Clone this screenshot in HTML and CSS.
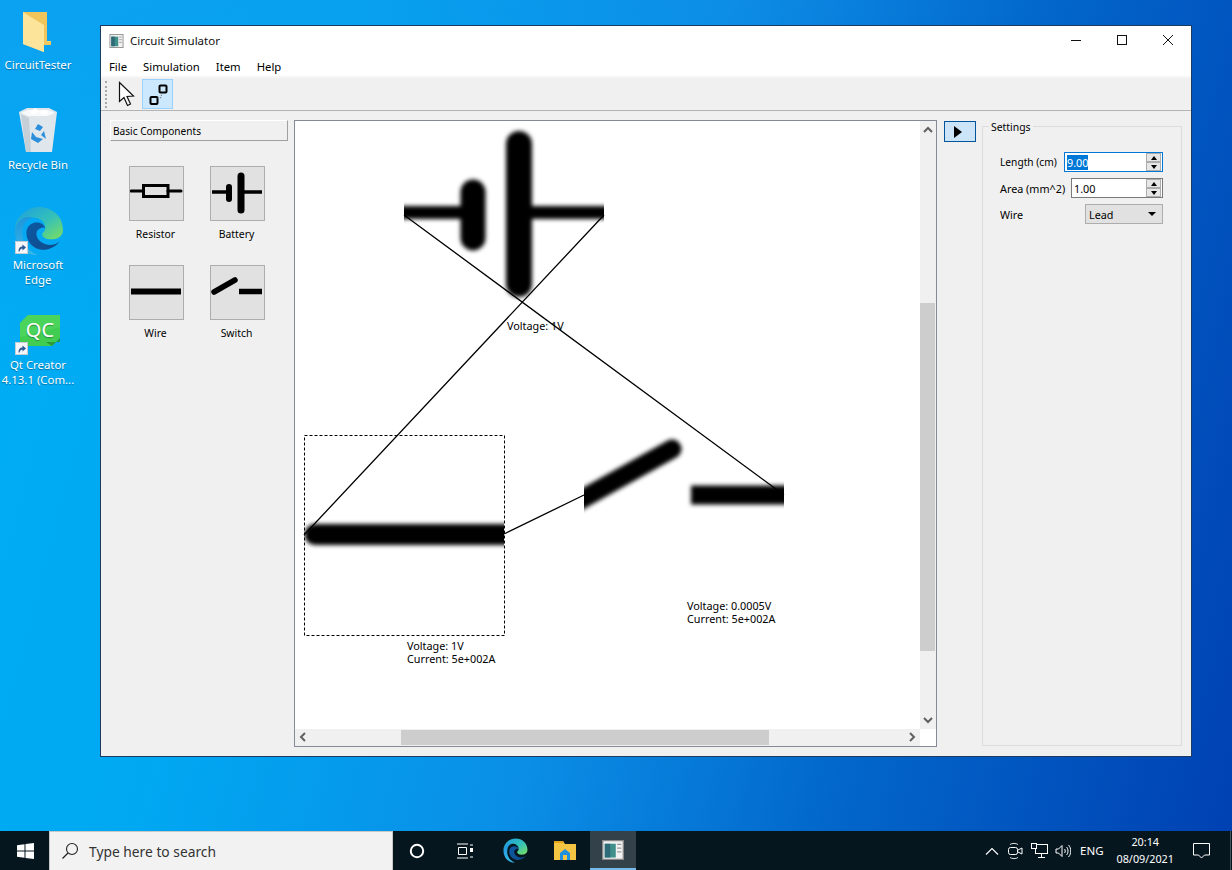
FILE: index.html
```
<!DOCTYPE html>
<html lang="en">
<head>
<meta charset="utf-8">
<title>Circuit Simulator</title>
<link rel="stylesheet" href="styles.css">
</head>
<body>
<svg class="defs" width="0" height="0" aria-hidden="true">
  <defs>
    <symbol id="shortcut" viewBox="0 0 13 13">
      <rect x="0.5" y="0.5" width="12" height="12" fill="#f4f6fa" stroke="#c8ccd4"/>
      <path d="M3.5 10.5C3.5 7 5 5.5 7.5 5.5V3.5L11 6.5L7.5 9.5V7.5C6 7.5 5 8.5 4.5 10.5Z" fill="#2b5797"/>
    </symbol>
    <linearGradient id="edgeA" x1="0" y1="0" x2="1" y2="1"><stop offset="0" stop-color="#1b9de2"/><stop offset="0.55" stop-color="#35c1b8"/><stop offset="1" stop-color="#7fe05a"/></linearGradient>
    <linearGradient id="edgeB" x1="0" y1="0" x2="1" y2="1"><stop offset="0" stop-color="#0c59a4"/><stop offset="1" stop-color="#114a8b"/></linearGradient>
    <linearGradient id="edgeC" x1="0" y1="0" x2="0" y2="1"><stop offset="0" stop-color="#1f95dc"/><stop offset="1" stop-color="#36b7e8"/></linearGradient>
    <symbol id="edge" viewBox="0 0 48 48">
      <path d="M24 1C37 1 47 10 47 23C47 29 42 32 36 32C31 32 27 30 27 27C27 25 30 25 30 21C30 15 25 11 18 11C10 11 3 16 1 22C2 10 12 1 24 1Z" fill="url(#edgeA)"/>
      <path d="M1 22C3 13 11 9 18 11C12 12 8 18 8 26C8 36 14 44 23 47C10 48 0 37 1 22Z" fill="url(#edgeC)"/>
      <path d="M30 21C28 14 14 13 12 24C11 33 18 42 28 42C34 42 40 39 44 34C40 37 35 38 31 37C24 35 20 29 22 24C24 21 28 20 30 21Z" fill="url(#edgeB)"/>
    </symbol>
    <symbol id="appicon" viewBox="0 0 16 16">
      <rect x="0.5" y="0.5" width="15" height="15" fill="#f2f2f2" stroke="#8a8a8a"/>
      <rect x="2" y="3" width="8" height="11" fill="#3f8f8a"/>
      <rect x="2" y="3" width="4" height="11" fill="#2f6a78"/>
      <rect x="11" y="3" width="3" height="1" fill="#999"/><rect x="11" y="6" width="3" height="1" fill="#999"/><rect x="11" y="9" width="3" height="1" fill="#999"/>
    </symbol>
  </defs>
</svg>

<main class="desktop">
  <div class="shortcut shortcut-tester">
    <svg class="desk-icon" width="30" height="42" viewBox="0 0 30 42">
      <path d="M1 1H25V30H29V33H22V41L1 33Z" fill="#f7d774"/>
      <path d="M1 1L22 14V41L1 33Z" fill="#fce59b"/>
      <path d="M22 14V34H29V31H25V1H1Z" fill="#efc55c"/>
    </svg>
    <span>CircuitTester</span>
  </div>
  <div class="shortcut shortcut-bin">
    <svg class="desk-icon" width="40" height="46" viewBox="0 0 40 46">
      <path d="M1 5L9 1H31L39 5L34 45H8Z" fill="#dfe6ec"/>
      <path d="M3 6L10 3H30L37 6L30 9H10Z" fill="#f7f9fb"/>
      <path d="M8 45L3 7L11 11L13 45Z" fill="#c4cfd8"/>
      <path d="M12 4L18 1L21 5L15 8ZM24 3L30 4L28 8L22 7Z" fill="#fff"/>
      <path d="M20 17L25 20L22 24L17 22ZM14 25L18 30L25 32L20 36L13 32ZM26 24L28 32L23 28Z" fill="#2c8fdc"/>
    </svg>
    <span>Recycle Bin</span>
  </div>
  <div class="shortcut shortcut-edge">
    <svg class="desk-icon" width="50" height="50"><use href="#edge"/></svg>
    <svg class="badge" width="13" height="13"><use href="#shortcut"/></svg>
    <span>Microsoft<br>Edge</span>
  </div>
  <div class="shortcut shortcut-qt">
    <svg class="desk-icon" width="40" height="31" viewBox="0 0 40 31">
      <path d="M8 0H40V23L32 31H0V8Z" fill="#41cd52"/>
      <path d="M8 0H40V12L0 22V8Z" fill="#52d862" opacity=".6"/>
      <path d="M40 23L32 31L26 27H40Z" fill="#2a9a39"/>
      <text x="20" y="22" class="qc-mark" text-anchor="middle">QC</text>
    </svg>
    <svg class="badge" width="13" height="13"><use href="#shortcut"/></svg>
    <span>Qt Creator<br>4.13.1 (Com...</span>
  </div>

  <section class="window">
    <header class="titlebar">
      <svg class="app-icon" width="15" height="14"><use href="#appicon"/></svg>
      <span class="title">Circuit Simulator</span>
      <div class="caption">
        <svg width="46" height="30" viewBox="0 0 46 30"><path d="M18 15.5H28" class="cap-line"/></svg>
        <svg width="46" height="30" viewBox="0 0 46 30"><rect x="18.5" y="10.5" width="9" height="9" class="cap-line"/></svg>
        <svg width="46" height="30" viewBox="0 0 46 30"><path d="M18 10L28 20M28 10L18 20" class="cap-line"/></svg>
      </div>
    </header>
    <nav class="menubar">
      <span>File</span><span>Simulation</span><span>Item</span><span>Help</span>
    </nav>
    <div class="toolbar">
      <div class="grip"></div>
      <button class="tool">
        <svg class="tool-arrow" width="18" height="28" viewBox="0 0 18 28"><path d="M2.5 2.5V21.5L7 17.5L10.5 25.5L13.5 24L10 16.5L16.5 16Z" fill="#fff" stroke="#111" stroke-width="1.2"/></svg>
      </button>
      <button class="tool tool-on">
        <svg width="22" height="22" viewBox="0 0 22 22"><rect x="12.500" y="2.500" width="7" height="7" rx="1" fill="none" stroke="#000" stroke-width="2"/><rect x="3.500" y="14" width="7" height="7" rx="1" fill="none" stroke="#000" stroke-width="2"/><path d="M10.500 15H13.500L15 10.500" fill="none" stroke="#777" stroke-dasharray="1.5 1"/></svg>
      </button>
    </div>

    <div class="content">
      <aside class="palette">
        <div class="palette-head">Basic Components</div>
        <div class="palette-grid">
          <figure class="part">
            <svg class="part-box" viewBox="0 0 53 53"><g class="sym"><path d="M1 24H13M38 24H51"/><rect x="13.500" y="18.500" width="24.500" height="11" fill="none"/></g></svg>
            <figcaption>Resistor</figcaption>
          </figure>
          <figure class="part">
            <svg class="part-box" viewBox="0 0 53 53"><g class="sym"><path d="M1 25H18M30 25H51" stroke-width="3.500" stroke-linecap="butt"/><path d="M18 20V32" stroke-width="6"/><path d="M30 9V43" stroke-width="7"/></g></svg>
            <figcaption>Battery</figcaption>
          </figure>
          <figure class="part">
            <svg class="part-box" viewBox="0 0 53 53"><g class="sym"><path d="M1 25.500H51" stroke-width="6" stroke-linecap="butt"/></g></svg>
            <figcaption>Wire</figcaption>
          </figure>
          <figure class="part">
            <svg class="part-box" viewBox="0 0 53 53"><g class="sym"><path d="M3 26L24 14" stroke-width="5.500"/><path d="M28 25.500H51" stroke-width="5.500" stroke-linecap="butt"/></g></svg>
            <figcaption>Switch</figcaption>
          </figure>
        </div>
      </aside>

      <div class="view">
        <svg class="scene" viewBox="295 121 625 608" width="625" height="608">
          <defs>
            <filter id="soft" filterUnits="userSpaceOnUse" x="280" y="100" width="700" height="650"><feGaussianBlur stdDeviation="2"/></filter>
            <clipPath id="c-batt"><rect x="404" y="112" width="200" height="200"/></clipPath>
            <clipPath id="c-wire"><rect x="304" y="435" width="200" height="200"/></clipPath>
            <clipPath id="c-sw"><rect x="584" y="395" width="200" height="200"/></clipPath>
          </defs>
          <g clip-path="url(#c-batt)"><g class="blur" filter="url(#soft)">
            <path d="M396 212.500H470M530 212.500H612" stroke-width="13" stroke-linecap="butt"/>
            <path d="M473 192V238" stroke-width="25"/>
            <path d="M519 144V284" stroke-width="26"/>
          </g></g>
          <g clip-path="url(#c-wire)"><g class="blur" filter="url(#soft)">
            <path d="M315 534.500H520" stroke-width="21"/>
          </g></g>
          <g clip-path="url(#c-sw)"><g class="blur" filter="url(#soft)">
            <path d="M575 503L672 449" stroke-width="19" stroke-linecap="round"/>
            <path d="M691 495H800" stroke-width="19" stroke-linecap="butt"/>
          </g></g>
          <path class="wire" d="M404 215L784 495M604 215L304 535M504 534L584 495"/>
          <rect class="selection" x="304.500" y="435.500" width="200" height="200"/>
          <text class="note" x="507" y="330">Voltage: 1V</text>
          <text class="note" x="407" y="650">Voltage: 1V</text>
          <text class="note" x="407" y="663">Current: 5e+002A</text>
          <text class="note" x="687" y="610">Voltage: 0.0005V</text>
          <text class="note" x="687" y="623">Current: 5e+002A</text>
        </svg>
        <div class="vbar">
          <svg class="arrow" width="16" height="18" viewBox="0 0 16 18"><path d="M4 11L8 7L12 11" class="chev"/></svg>
          <div class="vtrack"><div class="vthumb"></div></div>
          <svg class="arrow" width="16" height="18" viewBox="0 0 16 18"><path d="M4 7L8 11L12 7" class="chev"/></svg>
        </div>
        <div class="hbar">
          <svg class="arrow" width="16" height="16" viewBox="0 0 16 16"><path d="M10 4L6 8L10 12" class="chev"/></svg>
          <div class="htrack"><div class="hthumb"></div></div>
          <svg class="arrow" width="16" height="16" viewBox="0 0 16 16"><path d="M6 4L10 8L6 12" class="chev"/></svg>
        </div>
        <div class="corner"></div>
      </div>

      <button class="play"><svg width="8" height="12" viewBox="0 0 8 12"><path d="M0 0L8 6L0 12Z" fill="#000"/></svg></button>

      <div class="settings">
        <span class="legend">Settings</span>
        <div class="field">
          <label class="tight">Length (cm)</label>
          <div class="spin spin-focus spin-len"><span class="spin-val"><span class="picked">9.00</span></span><span class="spin-btns"><i class="up"></i><i class="down"></i></span></div>
        </div>
        <div class="field">
          <label>Area (mm^2)</label>
          <div class="spin spin-area"><span class="spin-val">1.00</span><span class="spin-btns"><i class="up"></i><i class="down"></i></span></div>
        </div>
        <div class="field">
          <label>Wire</label>
          <div class="combo"><span>Lead</span><i class="caret"></i></div>
        </div>
      </div>
    </div>
  </section>

  <footer class="taskbar">
    <div class="start">
      <svg width="17" height="16" viewBox="0 0 17 16"><path d="M0 2.300L7.500 1.200V7.500H0ZM8.500 1L17 0V7.500H8.500ZM0 8.500H7.500V14.800L0 13.700ZM8.500 8.500H17V16L8.500 15Z" fill="#fff"/></svg>
    </div>
    <div class="search">
      <svg width="18" height="18" viewBox="0 0 18 18"><circle cx="11" cy="7" r="5.500" fill="none" stroke="#222" stroke-width="1.100"/><path d="M7 11L1.500 16.500" stroke="#222" stroke-width="1.300"/></svg>
      <span>Type here to search</span>
    </div>
    <div class="task-slot slot-48">
      <svg width="16" height="16" viewBox="0 0 16 16"><circle cx="8" cy="8" r="6.200" fill="none" stroke="#fff" stroke-width="2"/></svg>
    </div>
    <div class="task-slot slot-48">
      <svg width="18" height="16" viewBox="0 0 18 16"><path d="M1 1H12M1 15H12M2.500 4.500H10.500V11.500H2.500Z" fill="none" stroke="#fff"/><path d="M14 2H17M14 14H17" stroke="#fff"/><rect x="14" y="5" width="3" height="4" fill="#fff"/></svg>
    </div>
    <div class="task-slot">
      <svg width="25" height="25"><use href="#edge"/></svg>
    </div>
    <div class="task-slot">
      <svg width="22" height="19" viewBox="0 0 22 19"><path d="M0 0H9L11 3H22V19H0Z" fill="#f4c542"/><path d="M0 0H9L10 2H0Z" fill="#e3a21a"/><path d="M6 19V12L11 8L16 12V19H13V14H9V19Z" fill="#1f8fe0"/></svg>
    </div>
    <div class="task-slot task-on">
      <svg width="22" height="20" viewBox="0 0 16 16" preserveAspectRatio="none"><use href="#appicon"/></svg>
    </div>
    <div class="tray">
      <svg width="14" height="8" viewBox="0 0 14 8"><path d="M1 7.500L7 1.500L13 7.500" fill="none" stroke="#fff" stroke-width="1.100"/></svg>
      <svg width="16" height="18" viewBox="0 0 16 18"><path d="M3 2.500C5 1 9 1 11 2.500M3 15.500C5 17 9 17 11 15.500" fill="none" stroke="#ddd"/><rect x="1.500" y="5.500" width="9" height="7" rx="2" fill="none" stroke="#fff"/><path d="M11 8L15 6V12L11 10" fill="none" stroke="#fff"/></svg>
      <svg width="17" height="15" viewBox="0 0 17 15"><rect x="4.500" y="1.500" width="12" height="9" fill="none" stroke="#fff"/><rect x="0.500" y="0.500" width="5" height="5" fill="#0a1a26" stroke="#fff"/><path d="M10.500 11V14M7 14.500H14" stroke="#fff"/></svg>
      <svg class="volume" width="16" height="14" viewBox="0 0 16 14"><path d="M1 5H3.500L7 1.500V12.500L3.500 9H1Z" fill="none" stroke="#fff"/><path d="M9.500 5C10.500 6 10.500 8 9.500 9M11.500 3C13.500 5 13.500 9 11.500 11M13.500 1C16.500 4 16.500 10 13.500 13" fill="none" stroke="#fff"/></svg>
      <span class="lang">ENG</span>
      <div class="clock"><span>20:14</span><span>08/09/2021</span></div>
      <svg class="notify" width="17" height="16" viewBox="0 0 17 16"><path d="M0.500 0.500H16.500V12H11.500L8.500 15L5.500 12H0.500Z" fill="none" stroke="#fff"/></svg>
    </div>
  </footer>
</main>
</body>
</html>
```

FILE: styles.css
```
* { box-sizing: border-box; }
html, body { margin: 0; padding: 0; }
body { width: 1232px; height: 870px; overflow: hidden; font-family: "Noto Sans", "Open Sans", sans-serif; }
.defs { position: absolute; }

.desktop {
  position: relative;
  width: 1232px;
  height: 870px;
  background:
    linear-gradient(160deg, rgba(40,130,230,.28) 0, rgba(40,130,230,0) 30%),
    linear-gradient(105deg, #00aef5 0, #00a8f2 24%, #0a8ee6 50%, #0266ca 72%, #0040b2 100%);
}

/* desktop icons */
.shortcut {
  position: absolute;
  left: 0;
  width: 76px;
  display: flex;
  flex-direction: column;
  align-items: center;
  color: #fff;
  font-size: 11.4px;
  line-height: 15px;
  text-align: center;
  text-shadow: 0 1px 1px rgba(0,0,0,.35);
}
.shortcut-tester { top: 11px; }
.shortcut-bin { top: 107px; }
.shortcut-edge { top: 206px; }
.shortcut-qt { top: 315px; }
.desk-icon { display: block; margin-bottom: 2px; }
.shortcut-tester .desk-icon { margin-bottom: 4px; margin-left: -3px; }
.shortcut-bin .desk-icon { margin-bottom: 4px; }
.shortcut-qt .desk-icon { margin-bottom: 11px; margin-left: 3px; }
.shortcut-edge .desk-icon { margin-bottom: 1px; margin-left: 2px; }
.badge { position: absolute; left: 15px; }
.shortcut-edge .badge { top: 35px; }
.shortcut-qt .badge { top: 27px; }
.qc-mark { font: 20px "Noto Sans", sans-serif; fill: #fff; }

/* window */
.window {
  position: absolute;
  left: 100px;
  top: 25px;
  width: 1092px;
  height: 732px;
  border: 1px solid #1d3a5f;
  background: #f0f0f0;
  display: flex;
  flex-direction: column;
  font-family: "Noto Sans", "Open Sans", sans-serif;
  font-size: 10.8px;
  color: #000;
}
.titlebar { height: 29px; background: #fff; display: flex; align-items: center; padding-left: 8px; }
.app-icon { display: block; margin-right: 6px; }
.title { font-size: 11.5px; color: #111; }
.caption { margin-left: auto; display: flex; margin-bottom: 2px; }
.caption svg { display: block; }
.cap-line { fill: none; stroke: #111; stroke-width: 1; }
.menubar { height: 23px; background: #fff; border-bottom: 2px solid #f6f6f6; display: flex; align-items: center; gap: 16px; padding: 2px 0 0 8px; font-size: 11.3px; }
.toolbar { height: 33px; border-bottom: 1px solid #b4b4b4; display: flex; align-items: flex-start; padding: 1px 0 0 4px; background: #f0f0f0; }
.grip { width: 2px; height: 27px; margin-top: 2px; border-left: 2px dotted #a8a8a8; margin-right: 4px; }
.tool { width: 31px; height: 30px; padding: 0; border: 1px solid transparent; background: none; display: flex; align-items: center; justify-content: center; }
.tool-on { background: #cce8ff; border-color: #99d1ff; }
.tool svg { display: block; }
.tool-arrow { margin-left: -2px; }

.content { flex: 1; display: flex; align-items: flex-start; padding-top: 9px; }

.palette { width: 193px; padding-left: 9px; flex: none; }
.palette-head { width: 178px; height: 21px; background: #f0f0f0; border-top: 1px solid #fff; border-left: 1px solid #fff; border-right: 1px solid #a0a0a0; border-bottom: 1px solid #a0a0a0; padding-left: 2px; line-height: 20px; font-size: 10.1px; }
.palette-grid { display: grid; grid-template-columns: 55px 55px; column-gap: 26px; row-gap: 24px; margin: 25px 0 0 19px; }
.part { margin: 0; display: flex; flex-direction: column; align-items: center; }
.part-box { width: 55px; height: 55px; display: block; background: #e1e1e1; border: 1px solid #adadad; }
.part figcaption { margin-top: 6px; padding-right: 2px; line-height: 14px; white-space: nowrap; font-size: 10.4px; }
.sym { fill: none; stroke: #000; stroke-width: 3; stroke-linecap: round; filter: blur(.35px); }

.view { width: 643px; height: 627px; flex: none; border: 1px solid #868a96; background: #f0f0f0; display: grid; grid-template-columns: 625px 16px; grid-template-rows: 608px 17px; }
.scene { display: block; background: #fff; }
.blur { fill: none; stroke: #000; stroke-linecap: round; }
.wire { fill: none; stroke: #000; stroke-width: 1.300; }
.selection { fill: none; stroke: #000; stroke-width: 1; stroke-dasharray: 3 2; }
.note { font: 10.8px "Noto Sans", sans-serif; fill: #000; }
.vbar { display: flex; flex-direction: column; width: 16px; }
.vtrack { flex: 1; }
.vthumb { width: 15px; height: 348px; margin-top: 164px; background: #cdcdcd; }
.hbar { display: flex; height: 17px; }
.htrack { flex: 1; }
.hthumb { width: 368px; height: 15px; margin: 1px 0 0 90px; background: #cdcdcd; }
.arrow { display: block; flex: none; }
.chev { fill: none; stroke: #606060; stroke-width: 2; }
.corner { background: #fff; }

.play { width: 32px; height: 21px; flex: none; margin: 1px 0 0 7px; padding: 0 4px 0 0; background: #cce4f7; border: 1px solid #005499; display: flex; align-items: center; justify-content: center; }
.play svg { display: block; }

.settings { width: 200px; height: 620px; flex: none; margin: 6px 0 0 6px; padding: 25px 18px 0 17px; border: 1px solid #dcdcdc; position: relative; display: flex; flex-direction: column; gap: 6px; }
.legend { position: absolute; left: 6px; top: -6px; padding: 0 2px; line-height: 13px; background: #f0f0f0; font-size: 10.4px; }
.field { height: 20px; display: flex; align-items: center; justify-content: space-between; }
.tight { font-size: 10.2px; }
.spin { height: 20px; display: flex; align-items: center; background: #fff; border: 1px solid #7a7a7a; padding-right: 1px; }
.spin-len { width: 99px; border-color: #0078d7; }
.spin-area { width: 92px; }
.spin-val { flex: 1; padding-left: 2px; white-space: nowrap; overflow: hidden; }
.picked { background: #0078d7; color: #fff; padding: 1px 0; }
.spin-btns { width: 15px; height: 18px; display: flex; flex-direction: column; }
.spin-btns i { flex: 1; display: flex; align-items: center; justify-content: center; background: #e6e6e6; border: 1px solid #adadad; }
.spin-btns i::after { content: ""; width: 0; height: 0; border-left: 3px solid transparent; border-right: 3px solid transparent; }
.spin-btns .up::after { border-bottom: 4px solid #000; }
.spin-btns .down::after { border-top: 4px solid #000; }
.combo { width: 78px; height: 20px; background: #e1e1e1; border: 1px solid #adadad; display: flex; align-items: center; justify-content: space-between; padding: 0 6px 0 3px; }
.caret { width: 0; height: 0; border-left: 4px solid transparent; border-right: 4px solid transparent; border-top: 4px solid #000; }

/* taskbar */
.taskbar { position: absolute; left: 0; right: 0; bottom: 0; height: 39px; background: #06161f; display: flex; align-items: stretch; color: #fff; }
.start { width: 49px; flex: none; display: flex; align-items: center; justify-content: center; padding-left: 2px; }
.search { width: 344px; flex: none; background: #f2f2f2; border: 1px solid #c8c8c8; border-bottom: none; display: flex; align-items: center; padding-left: 11px; gap: 10px; color: #333; font-size: 13.8px; }
.search svg { display: block; }
.task-slot { width: 50px; flex: none; display: flex; align-items: center; justify-content: center; }
.slot-48 { width: 48px; }
.task-slot.slot-48 + .task-slot:not(.slot-48) { margin-left: 1px; }
.task-on { width: 46px; background: #33414b; border-bottom: 2px solid #76b9ed; }
.tray { flex: 1; display: flex; align-items: center; gap: 8px; padding-left: 349px; border-right: 1px solid #46525c; margin-right: 1px; color: #fff; }
.tray svg { display: block; flex: none; }
.volume { margin-left: -1px; }
.lang { font-size: 11.5px; margin-left: 1px; }
.clock { display: flex; flex-direction: column; align-items: center; font-size: 10.8px; line-height: 17px; margin: 0 0 2px 5px; }
.tray .notify { margin-left: 11px; }
```
